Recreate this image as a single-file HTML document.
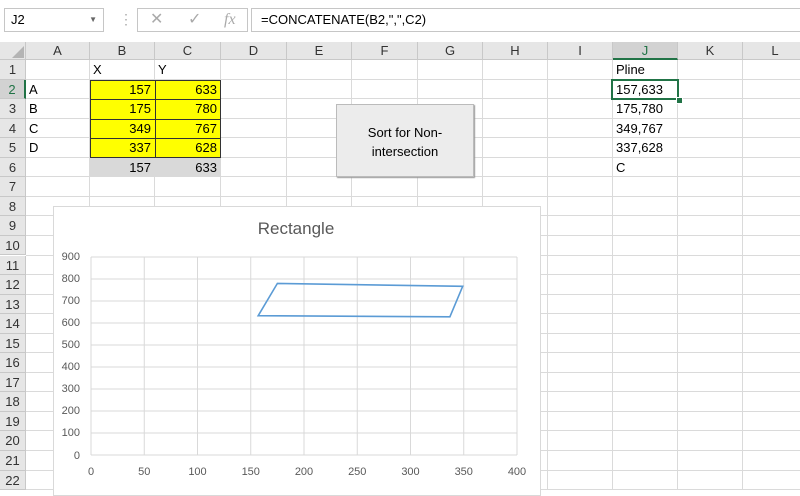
<!DOCTYPE html><html><head><style>
body{margin:0;width:800px;height:483px;overflow:hidden;background:#fff;font-family:"Liberation Sans",Calibri,sans-serif;position:relative}
.a{position:absolute}
.ch{position:absolute;top:42px;height:18px;background:#e6e6e6;border-right:1px solid #c8c8c8;border-bottom:1px solid #c8c8c8;font-size:13px;color:#333;text-align:center;line-height:18px;box-sizing:border-box}
.rh{position:absolute;left:0;width:26px;background:#e6e6e6;border-bottom:1px solid #c8c8c8;border-right:1px solid #c8c8c8;font-size:13px;color:#333;text-align:center;box-sizing:border-box}
.c{position:absolute;font-size:13px;color:#000;box-sizing:border-box;padding:0 3px;line-height:19px}
</style></head><body>
<div class="a" style="left:0;top:0;width:800px;height:42px;background:#fff;border-bottom:1px solid #d4d4d4"></div>
<div class="a" style="left:4px;top:8px;width:100px;height:24px;border:1px solid #c6c6c6;box-sizing:border-box;font-size:13px;line-height:22px;padding-left:6px">J2<span style="position:absolute;right:6px;top:0;font-size:8px;color:#666">▼</span></div>
<div class="a" style="left:119px;top:11px;color:#aaa;font-size:14px">⋮</div>
<div class="a" style="left:137px;top:8px;width:111px;height:24px;border:1px solid #c6c6c6;box-sizing:border-box;color:#aaa;font-size:16px;line-height:22px"><span style="position:absolute;left:12px">✕</span><span style="position:absolute;left:50px">✓</span><span style="position:absolute;left:86px;font-style:italic;font-family:'Liberation Serif',serif">fx</span></div>
<div class="a" style="left:251px;top:8px;width:560px;height:24px;border:1px solid #c6c6c6;box-sizing:border-box;font-size:13px;line-height:22px;padding-left:9px">=CONCATENATE(B2,",",C2)</div>
<div class="ch" style="left:0;width:26px"></div>
<svg class="a" style="left:12px;top:46px" width="12" height="12"><polygon points="12,0 12,12 0,12" fill="#b4b4b4"/></svg>
<div id="g"></div>
<script>
var cols=[["A",26,90],["B",90,155],["C",155,221],["D",221,287],["E",287,352],["F",352,418],["G",418,483],["H",483,548],["I",548,613],["J",613,678],["K",678,743],["L",743,808]];
var h="";
cols.forEach(function(c){h+='<div class="ch" style="left:'+c[1]+'px;width:'+(c[2]-c[1])+'px;'+(c[0]=="J"?'background:#d2d2d2;color:#217346;border-bottom:2px solid #217346':'')+'">'+c[0]+'</div>';
h+='<div class="a" style="left:'+(c[2]-1)+'px;top:60px;width:1px;height:430px;background:#dadada"></div>';});
for(var r=1;r<=22;r++){var t=60+(r-1)*19.55;
h+='<div class="rh" style="top:'+t+'px;height:19.55px;line-height:19px;'+(r==2?'background:#d2d2d2;color:#217346;border-right:2px solid #217346':'')+'">'+r+'</div>';
h+='<div class="a" style="left:26px;top:'+(t+18.55)+'px;width:780px;height:1px;background:#dadada"></div>';}
document.getElementById("g").innerHTML=h;
</script>
<div class="c" style="left:90px;top:60px">X</div><div class="c" style="left:155px;top:60px">Y</div>
<div class="c" style="left:26px;top:80px">A</div><div class="c" style="left:26px;top:99px">B</div><div class="c" style="left:26px;top:119px">C</div><div class="c" style="left:26px;top:138px">D</div>
<div class="a" style="left:90px;top:80px;width:131px;height:78px;background:#ffff00;border:1px solid #333;box-sizing:border-box"></div>
<div class="a" style="left:155px;top:80px;width:1px;height:78px;background:#333"></div>
<div class="a" style="left:90px;top:99px;width:131px;height:1px;background:#333"></div>
<div class="a" style="left:90px;top:119px;width:131px;height:1px;background:#333"></div>
<div class="a" style="left:90px;top:138px;width:131px;height:1px;background:#333"></div>
<div class="a" style="left:90px;top:158px;width:131px;height:19px;background:#d9d9d9"></div>
<div class="c" style="left:90px;top:80px;width:64px;text-align:right">157</div><div class="c" style="left:155px;top:80px;width:65px;text-align:right">633</div>
<div class="c" style="left:90px;top:99px;width:64px;text-align:right">175</div><div class="c" style="left:155px;top:99px;width:65px;text-align:right">780</div>
<div class="c" style="left:90px;top:119px;width:64px;text-align:right">349</div><div class="c" style="left:155px;top:119px;width:65px;text-align:right">767</div>
<div class="c" style="left:90px;top:138px;width:64px;text-align:right">337</div><div class="c" style="left:155px;top:138px;width:65px;text-align:right">628</div>
<div class="c" style="left:90px;top:158px;width:64px;text-align:right">157</div><div class="c" style="left:155px;top:158px;width:65px;text-align:right">633</div>
<div class="c" style="left:613px;top:60px">Pline</div>
<div class="c" style="left:613px;top:80px">157,633</div><div class="c" style="left:613px;top:99px">175,780</div><div class="c" style="left:613px;top:119px">349,767</div><div class="c" style="left:613px;top:138px">337,628</div><div class="c" style="left:613px;top:158px">C</div>
<div class="a" style="left:611px;top:79px;width:68px;height:21px;border:2px solid #217346;box-sizing:border-box"></div>
<div class="a" style="left:676px;top:97px;width:5px;height:5px;background:#217346;border:1px solid #fff"></div>
<div class="a" style="left:336px;top:104px;width:138px;height:73px;background:#ececec;border:1px solid #bbb;box-sizing:border-box;box-shadow:1px 1px 1px #999;font-size:13px;text-align:center;padding-top:18px;line-height:19px">Sort for Non-<br>intersection</div>
<div class="a" style="left:53px;top:206px;width:488px;height:290px;background:#fff;border:1px solid #d9d9d9;box-sizing:border-box"></div>
<svg class="a" style="left:0;top:0" width="800" height="483">
<text x="296" y="234" font-size="17" fill="#595959" text-anchor="middle" font-family="Liberation Sans,sans-serif">Rectangle</text>
<g stroke="#d9d9d9" stroke-width="1">
<line x1="91" y1="257" x2="517" y2="257"/><line x1="91" y1="279" x2="517" y2="279"/><line x1="91" y1="301" x2="517" y2="301"/><line x1="91" y1="323" x2="517" y2="323"/><line x1="91" y1="345" x2="517" y2="345"/><line x1="91" y1="367" x2="517" y2="367"/><line x1="91" y1="389" x2="517" y2="389"/><line x1="91" y1="411" x2="517" y2="411"/><line x1="91" y1="433" x2="517" y2="433"/><line x1="91" y1="455" x2="517" y2="455"/>
<line x1="91" y1="257" x2="91" y2="455"/><line x1="144.25" y1="257" x2="144.25" y2="455"/><line x1="197.5" y1="257" x2="197.5" y2="455"/><line x1="250.75" y1="257" x2="250.75" y2="455"/><line x1="304" y1="257" x2="304" y2="455"/><line x1="357.25" y1="257" x2="357.25" y2="455"/><line x1="410.5" y1="257" x2="410.5" y2="455"/><line x1="463.75" y1="257" x2="463.75" y2="455"/><line x1="517" y1="257" x2="517" y2="455"/>
</g>
<polygon points="258.2,315.7 277.4,283.4 462.7,286.3 449.9,316.8" fill="none" stroke="#5b9bd5" stroke-width="1.6"/>
<g font-size="11" fill="#595959" font-family="Liberation Sans,sans-serif" text-anchor="end">
<text x="80" y="260">900</text><text x="80" y="282">800</text><text x="80" y="304">700</text><text x="80" y="326">600</text><text x="80" y="348">500</text><text x="80" y="370">400</text><text x="80" y="392">300</text><text x="80" y="414">200</text><text x="80" y="436">100</text><text x="80" y="459">0</text>
</g>
<g font-size="11" fill="#595959" font-family="Liberation Sans,sans-serif" text-anchor="middle">
<text x="91" y="475">0</text><text x="144.25" y="475">50</text><text x="197.5" y="475">100</text><text x="250.75" y="475">150</text><text x="304" y="475">200</text><text x="357.25" y="475">250</text><text x="410.5" y="475">300</text><text x="463.75" y="475">350</text><text x="517" y="475">400</text>
</g>
</svg>
</body></html>
